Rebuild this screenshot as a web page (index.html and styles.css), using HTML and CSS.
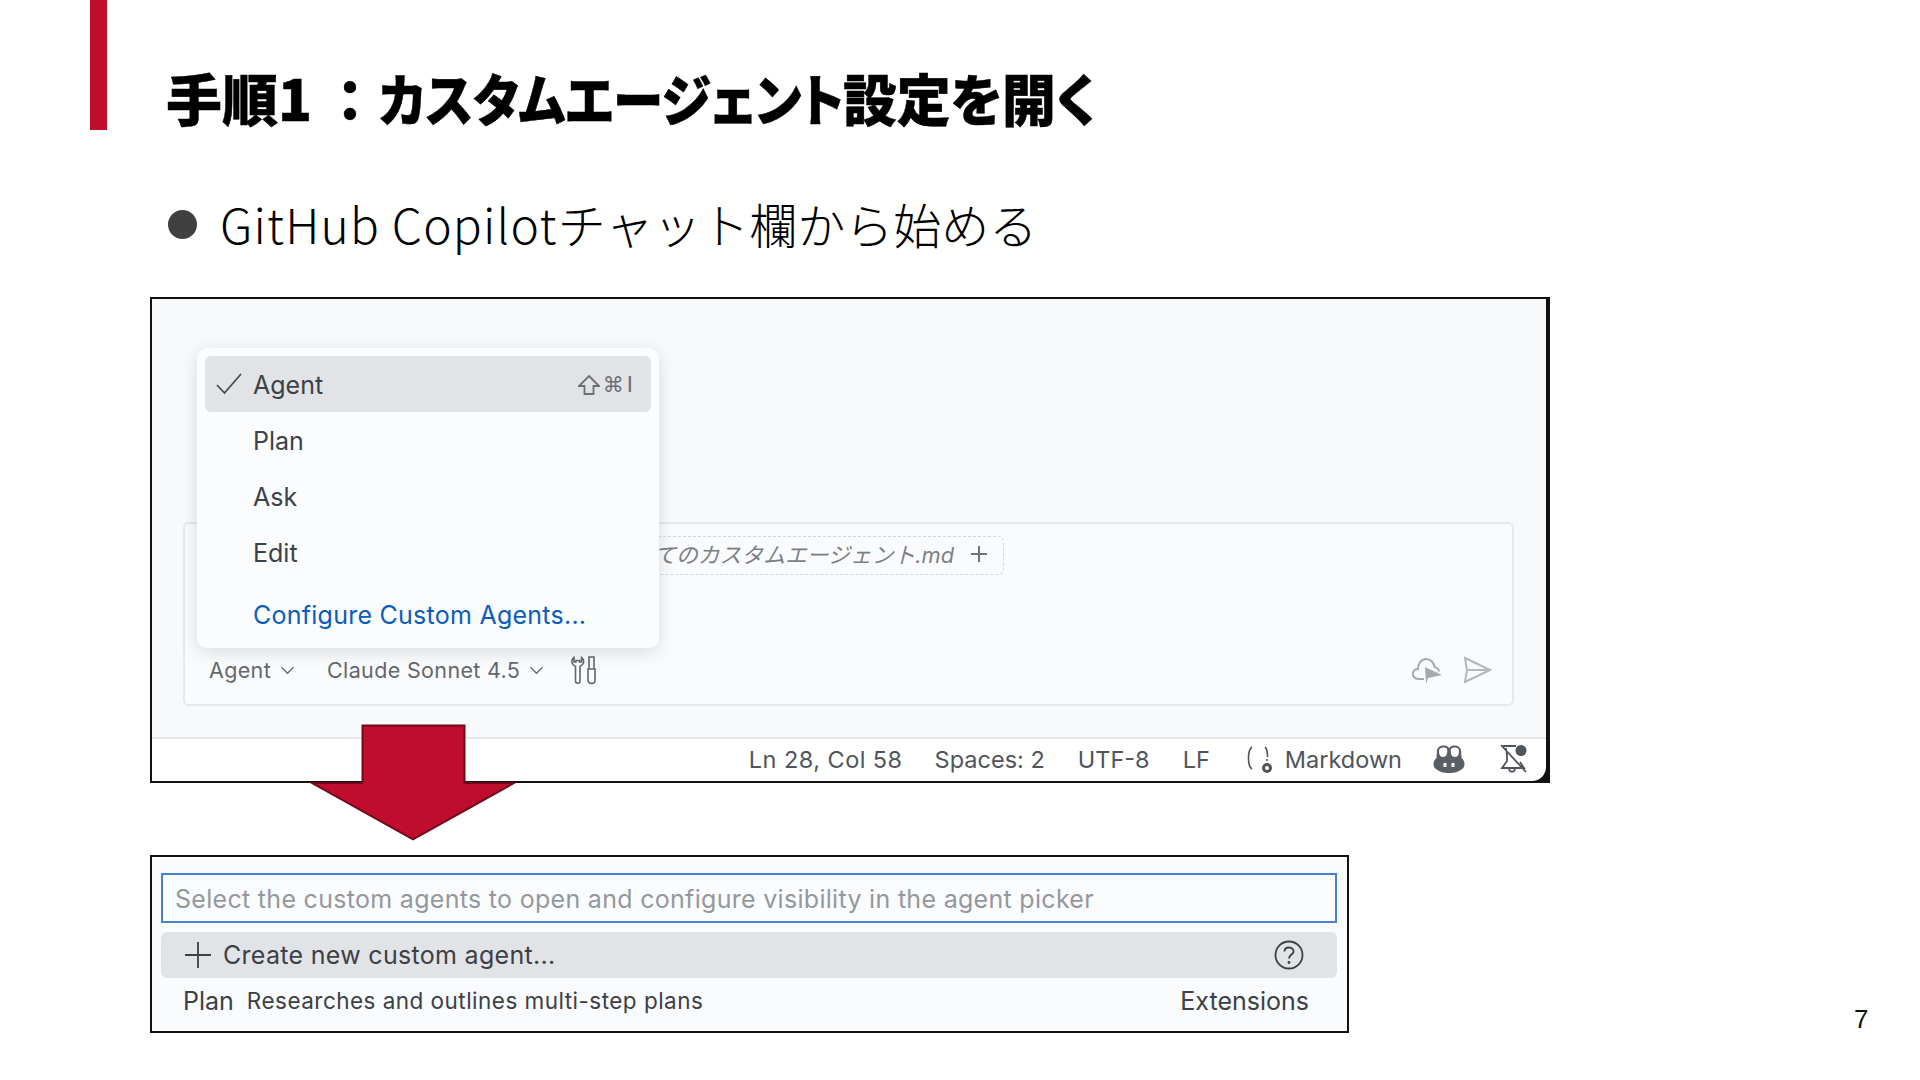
FILE: index.html
```html
<!DOCTYPE html>
<html lang="ja">
<head>
<meta charset="utf-8">
<title>手順1</title>
<link rel="stylesheet" href="styles.css">
</head>
<body>
<div class="slide">
  <header class="head">
    <div class="accent"></div>
    <h1 class="title">手順1<span class="colon">：</span><span class="t-kana">カスタムエージェント</span><span class="t-kanji">設定を開く</span></h1>
  </header>
  <div class="bullet"><span class="dot"></span><span class="bullet-text"><span class="latin">GitHub Copilot</span>チャット欄から始める</span></div>

  <section class="shot chat-shot">
    <div class="chat-area">
      <div class="chat-box">
        <div class="chip"><span class="chip-text">てのカスタムエージェント.md</span>
          <svg class="chip-plus" viewBox="0 0 20 20"><path d="M10 2v16M2 10h16"/></svg>
        </div>
        <div class="chat-bar">
          <span class="pick">Agent<svg class="chev" viewBox="0 0 16 10"><path d="M1.500 2 8 8.500 14.500 2"/></svg></span>
          <span class="pick model">Claude Sonnet 4.5<svg class="chev" viewBox="0 0 16 10"><path d="M1.500 2 8 8.500 14.500 2"/></svg></span>
          <svg class="tools" viewBox="0 0 28 30"><path d="M4 2.500C1.500 4 1.200 7.500 3 9.500L5.500 11.500V26C5.500 29 10 29 10 26V11.500L12.500 9.500C14.300 7.500 14 4 11.500 2.500V7H9.500V5.500H6V7H4Z"/><path d="M19 2h5v12h-5zM18 14h7V25C25 29.500 18 29.500 18 25Z"/></svg>
          <span class="send-group">
            <svg class="cloud" viewBox="0 0 32 30"><path d="M13 24H8C3 24 1 20.500 2 17.500 3 15 5 14 7 14 7 9 10 4 15 4 20 4 23 8 23.500 12 26 12.500 28 14.500 28 16.500"/><path class="solid" d="M14 12 31 20 17 23 15 29Z"/></svg>
            <svg class="send" viewBox="0 0 30 30"><path d="M3 3 28 15 3 27 5 15ZM5 15H28"/></svg>
          </span>
        </div>
      </div>
    </div>
    <footer class="status">
      <span class="pos">Ln 28, Col 58</span>
      <span>Spaces: 2</span>
      <span>UTF-8</span>
      <span>LF</span>
      <span class="lang">
        <svg class="braces" viewBox="0 0 28 32"><path d="M6 4C3 6 2.500 10 2.500 15 2.500 20 3 24 6 26M19 4C21 5.500 21.500 9 21.500 14"/><path d="M21 16v2"/><circle class="gear" cx="21" cy="25" r="3.500"/></svg>
        Markdown
      </span>
      <svg class="copilot" viewBox="0 0 34 30"><path class="cp-body" d="M4.500 14C1.500 16 1 20 2 23 6 28 12 29 17 29 22 29 28 28 32 23 33 20 32.500 16 29.500 14L29 6C28 2 24 1 21 1.500 19 2 18 3 17 4 16 3 15 2 13 1.500 10 1 6 2 5 6Z"/><path class="cp-hole" d="M7.500 5C9 3 14 3 15 5 15.800 8 15 13 11 13 7 13 6.500 8 7.500 5ZM26.500 5C25 3 20 3 19 5 18.200 8 19 13 23 13 27 13 27.500 8 26.500 5Z"/><path class="cp-eyes" d="M13 19v4M21 19v4"/></svg>
      <svg class="bell" viewBox="0 0 30 30"><path d="M2 1 27 28M4 2H17M7 4 8 12V17L3 24H25L21 18M10 24C10 29 16 29 16 24"/><circle cx="22" cy="6.500" r="5.500"/></svg>
    </footer>
    <div class="menu">
      <div class="menu-row active">
        <svg class="check" viewBox="0 0 28 24"><path d="M2 13 9.500 21 26 2"/></svg>
        <span>Agent</span>
        <span class="keys"><svg class="shift" viewBox="0 0 22 22"><path d="M11 2 21 12H15.500V20H6.500V12H1Z"/></svg>⌘I</span>
      </div>
      <div class="menu-row">Plan</div>
      <div class="menu-row">Ask</div>
      <div class="menu-row">Edit</div>
      <div class="menu-row link">Configure Custom Agents...</div>
    </div>
    <svg class="arrow" viewBox="0 0 208 118"><path d="M53 1H156V59H206L104 116 2 59H53Z"/></svg>
  </section>

  <section class="shot picker">
    <div class="picker-input">Select the custom agents to open and configure visibility in the agent picker</div>
    <div class="picker-row">
      <svg class="plus" viewBox="0 0 28 28"><path d="M14 1v26M1 14h26"/></svg>
      <span>Create new custom agent...</span>
      <svg class="help" viewBox="0 0 30 30"><circle cx="15" cy="15" r="13.500"/><path d="M10.500 11.500C10.500 8.500 13 7.500 15 7.500 18 7.500 20 9.500 19.500 12 19 14.500 15 15 15 18.500"/><circle class="help-dot" cx="15" cy="22.500" r="1.400"/></svg>
    </div>
    <div class="picker-item"><span class="item-name">Plan</span><span class="item-desc">Researches and outlines multi-step plans</span><span class="item-src">Extensions</span></div>
  </section>
  <div class="page-num">7</div>
</div>
</body>
</html>
```
FILE: styles.css
```css
* { box-sizing: border-box; }
html, body { margin: 0; padding: 0; background: #fff; }
.slide { position: relative; width: 1920px; height: 1080px; overflow: hidden; background: #fff; font-family: Inter, "Noto Sans CJK JP", sans-serif; }

.head { display: flex; align-items: flex-start; padding-left: 90px; height: 130px; }
.accent { width: 17px; height: 130px; background: #c00d2d; flex: none; }
.title { margin: 64px 0 0 59px; font: 900 56px/66px "Noto Sans CJK JP", sans-serif; font-feature-settings: "palt"; -webkit-text-stroke: .5px #000; color: #000; white-space: nowrap; }
.colon { margin: 0 15px 0 24px; }
.t-kana { display: inline-block; transform: scaleX(.9); transform-origin: left center; margin-right: -52px; }
.t-kanji { display: inline-block; transform: scaleX(.96); transform-origin: left center; }

.bullet { display: flex; align-items: center; gap: 23px; margin: 65px 0 0 168px; height: 56px; }
.dot { width: 29px; height: 29px; margin-top: 3px; border-radius: 50%; background: #404040; flex: none; }
.bullet-text { font: 300 48px/56px "Noto Sans CJK JP", sans-serif; color: #000; white-space: nowrap; }
.latin { letter-spacing: 1.200px; }

.shot { position: relative; margin-left: 150px; border: 2px solid #111; background: #f8f9fa; color: #3c4047; }
.chat-shot { width: 1400px; height: 486px; margin-top: 46px; display: flex; flex-direction: column; border-right-width: 4px; background: #111; }
.chat-area { flex: 1; display: flex; flex-direction: column; justify-content: flex-end; padding: 0 32px 31px 31px; background: #f8f9fa; }
.chat-box { height: 184px; border: 2px solid #e6e8ea; border-radius: 6px; background: #fafbfc; display: flex; flex-direction: column; justify-content: space-between; padding: 12px 20px 14px 24px; }
.chip { align-self: flex-start; width: 802px; height: 39px; margin-left: -7px; display: flex; align-items: center; justify-content: flex-end; gap: 15px; padding-right: 14px; padding-bottom: 4px; border: 1.500px dashed #d4d6d9; border-radius: 6px; }
.chip-text { font-size: 21.800px; font-style: italic; color: #7c8086; }
.chip-plus { width: 20px; height: 20px; fill: none; stroke: #6f7379; stroke-width: 2; }
.chat-bar { display: flex; align-items: center; height: 40px; font-size: 21.500px; letter-spacing: .35px; color: #63676e; }
.pick { display: flex; align-items: center; gap: 9px; margin-right: 32px; }
.model { margin-right: 26px; }
.chev { width: 15px; height: 10px; fill: none; stroke: #5f636a; stroke-width: 1.300; }
.tools { width: 28px; height: 30px; fill: none; stroke: #63676e; stroke-width: 1.600; }
.send-group { margin-left: auto; display: flex; align-items: center; gap: 19px; }
.cloud { width: 32px; height: 30px; fill: none; stroke: #a6a9ad; stroke-width: 2; }
.cloud .solid { fill: #a6a9ad; stroke: none; }
.send { width: 30px; height: 30px; fill: none; stroke: #b5b8bb; stroke-width: 2; }

.status { height: 44px; flex: none; background: #fff; border-top: 2px solid #e7e8ea; display: flex; align-items: center; justify-content: flex-end; gap: 33px; padding: 0 17px 2px 0; font-size: 23.500px; color: #50545b; border-bottom-right-radius: 14px; }
.pos { letter-spacing: .45px; margin-right: -1px; }
.lang { display: flex; align-items: center; gap: 11px; margin-left: 3px; }
.braces { width: 28px; height: 32px; fill: none; stroke: #50545b; stroke-width: 1.600; }
.braces .gear { stroke-width: 3; }
.copilot { width: 34px; height: 30px; margin-left: -3px; }
.cp-body { fill: #5a5e65; }
.cp-hole { fill: #fff; }
.cp-eyes { stroke: #fff; stroke-width: 3; fill: none; }
.bell { width: 30px; height: 30px; fill: none; stroke: #50545b; stroke-width: 1.800; }
.bell circle { fill: #50545b; stroke: none; }

.menu { position: absolute; left: 45px; top: 49px; width: 462px; height: 300px; padding: 8px 8px 0; background: #fbfcfd; border-radius: 10px; box-shadow: 0 4px 18px rgba(0, 0, 0, .13); font-size: 25px; color: #3d4148; }
.menu-row { position: relative; height: 56px; display: flex; align-items: center; padding: 2px 0 0 48px; border-radius: 6px; }
.menu-row.active { background: #e2e3e6; }
.check { position: absolute; left: 10px; top: 16px; width: 28px; height: 24px; fill: none; stroke: #44484f; stroke-width: 1.700; }
.keys { margin-left: auto; margin-right: 15px; display: flex; align-items: center; gap: 3px; font-family: "DejaVu Sans", sans-serif; font-size: 21px; letter-spacing: 3px; color: #6a6e75; }
.shift { width: 22px; height: 22px; fill: none; stroke: #6a6e75; stroke-width: 1.800; }
.link { color: #0c5cbd; margin-top: 6px; letter-spacing: .25px; }

.arrow { position: absolute; left: 158px; top: 425px; width: 206px; height: 118px; z-index: 2; fill: #c00d2d; stroke: #6e0a1c; stroke-width: 2; }

.picker { width: 1199px; height: 178px; margin-top: 72px; background: #f9fbfc; padding: 16px 10px 0 9px; display: flex; flex-direction: column; font-size: 25px; }
.picker-input { height: 50px; flex: none; display: flex; align-items: center; padding: 2px 0 0 12px; border: 2px solid #4a80cb; background: #fbfcfd; color: #94989e; letter-spacing: .3px; }
.picker-row { height: 46px; flex: none; margin-top: 9px; display: flex; align-items: center; padding-left: 23px; background: #e2e3e6; border-radius: 6px; color: #3c4047; letter-spacing: .3px; }
.plus { width: 28px; height: 28px; fill: none; stroke: #3c4047; stroke-width: 1.800; margin-right: 11px; }
.help { width: 30px; height: 30px; margin-left: auto; margin-right: 33px; fill: none; stroke: #3c4047; stroke-width: 1.800; }
.help-dot { fill: #3c4047; stroke: none; }
.picker-item { flex: 1; display: flex; align-items: center; padding: 0 28px 8px 22px; }
.item-name { margin-right: 13px; }
.item-desc { font-size: 22.500px; letter-spacing: .47px; }
.item-src { margin-left: auto; }

.page-num { position: absolute; left: 1854px; top: 1004px; font: 26px/30px "Liberation Sans", sans-serif; color: #111; }
```
